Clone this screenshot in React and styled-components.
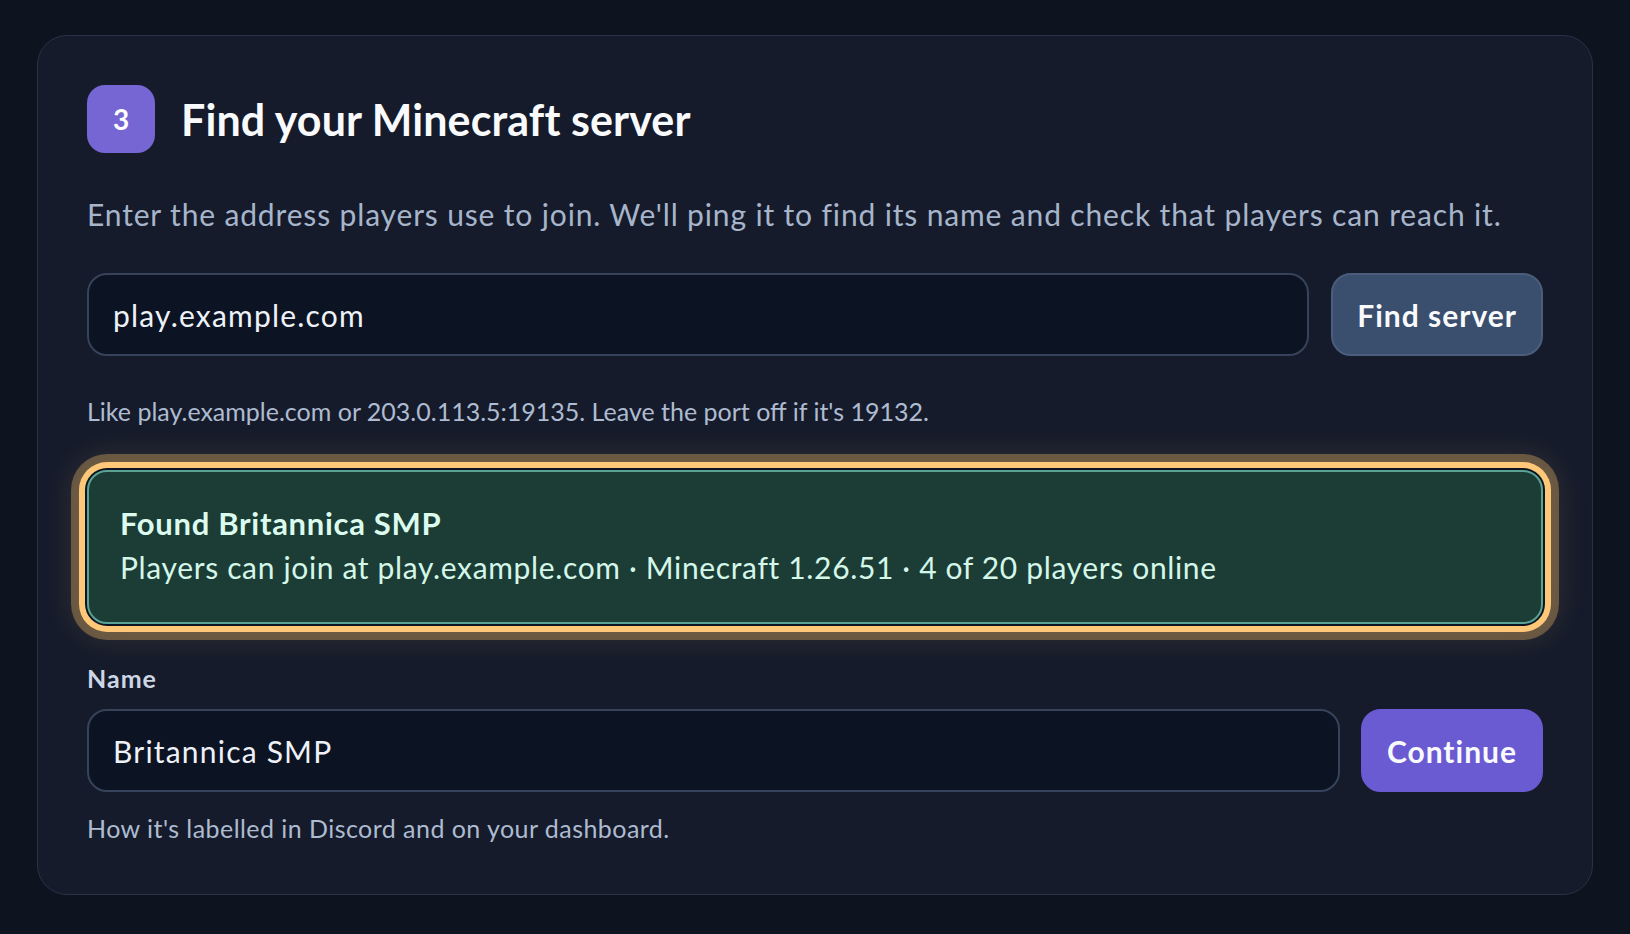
import React from 'react';
import styled, { createGlobalStyle } from 'styled-components';

const GlobalStyle = createGlobalStyle`
  html, body {
    margin: 0;
    padding: 0;
    background: #0e1320;
  }
  body {
    font-family: 'Lato', 'Noto Sans', sans-serif;
    -webkit-font-smoothing: antialiased;
  }
`;

const Page = styled.div`
  padding: 35px 37px 39px;
`;

const Card = styled.section`
  background: #151b2b;
  border: 1px solid #283246;
  border-radius: 30px;
  padding: 49px 49px 48px;
`;

const Header = styled.div`
  display: flex;
  align-items: center;
  gap: 26px;
`;

const StepBadge = styled.div`
  width: 68px;
  height: 68px;
  border-radius: 18px;
  background: #7566d4;
  color: #ffffff;
  display: flex;
  align-items: center;
  justify-content: center;
  font-size: 28px;
  font-weight: 700;
`;

const Title = styled.h2`
  margin: 0;
  color: #f8fafc;
  font-size: 43px;
  font-weight: 700;
  letter-spacing: 0.1px;
`;

const Lead = styled.p`
  margin: 41px 0 39px;
  color: #a7b5cb;
  font-size: 30px;
  line-height: 40px;
  letter-spacing: 0.85px;
`;

const Row = styled.div`
  display: flex;
  gap: ${(p) => p.$gap || 22}px;
`;

const Field = styled.input`
  flex: 1;
  min-width: 0;
  height: 83px;
  box-sizing: border-box;
  background: #0c1322;
  border: 2px solid #36435a;
  border-radius: 20px;
  padding: 0 24px;
  color: #eef2f8;
  font-family: inherit;
  font-size: 30px;
  letter-spacing: 1.2px;
  outline: none;
`;

const Button = styled.button`
  height: 83px;
  flex-shrink: 0;
  box-sizing: border-box;
  padding: 0 24px;
  border-radius: 20px;
  font-family: inherit;
  font-size: 30px;
  font-weight: 700;
  letter-spacing: 1px;
  color: #f8fafc;
  cursor: pointer;
  background: ${(p) => (p.$primary ? '#6b5bd3' : '#3a4e6e')};
  border: 2px solid ${(p) => (p.$primary ? '#6b5bd3' : '#4b5d7c')};
`;

const Hint = styled.p`
  margin: ${(p) => p.$top || 38}px 0 0;
  color: #aebbd0;
  font-size: 25px;
  line-height: 35px;
  letter-spacing: ${(p) => p.$spacing || 0}px;
`;

const Found = styled.div`
  margin: 41px 0 0;
  background: #1c3d35;
  border: 2px solid #5aa394;
  border-radius: 20px;
  padding: 29px 31px 33px;
  box-shadow:
    0 0 0 2px #0e1522,
    0 0 0 8px #ffc878,
    0 0 0 16px rgba(255, 196, 110, 0.32),
    0 0 30px 16px rgba(255, 196, 110, 0.12);
`;

const FoundTitle = styled.div`
  color: #dcfbef;
  font-size: 31px;
  font-weight: 700;
  line-height: 44px;
  letter-spacing: 0.7px;
`;

const FoundText = styled.div`
  color: #d4f7ea;
  font-size: 30px;
  line-height: 44px;
  letter-spacing: 0.65px;
`;

const Label = styled.label`
  display: block;
  margin: 38px 0 15px;
  color: #cdd6e4;
  font-size: 25px;
  font-weight: 700;
  line-height: 32px;
  letter-spacing: 1px;
`;

export default function App() {
  return (
    <Page>
      <GlobalStyle />
      <Card>
        <Header>
          <StepBadge>3</StepBadge>
          <Title>Find your Minecraft server</Title>
        </Header>
        <Lead>
          Enter the address players use to join. We'll ping it to find its name and check that players can reach it.
        </Lead>
        <Row>
          <Field defaultValue="play.example.com" />
          <Button>Find server</Button>
        </Row>
        <Hint>Like play.example.com or 203.0.113.5:19135. Leave the port off if it's 19132.</Hint>
        <Found>
          <FoundTitle>Found Britannica SMP</FoundTitle>
          <FoundText>
            Players can join at play.example.com · Minecraft 1.26.51 · 4 of 20 players online
          </FoundText>
        </Found>
        <Label htmlFor="server-name">Name</Label>
        <Row $gap={21}>
          <Field id="server-name" defaultValue="Britannica SMP" />
          <Button $primary>Continue</Button>
        </Row>
        <Hint $top={19} $spacing={0.45}>How it's labelled in Discord and on your dashboard.</Hint>
      </Card>
    </Page>
  );
}
